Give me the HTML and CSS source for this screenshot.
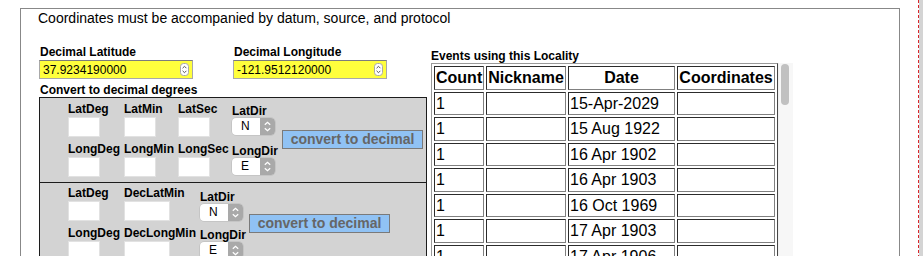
FILE: index.html
```html
<!DOCTYPE HTML>
<html>
  <head>
    <meta charset="utf-8">
    <title>Locality Coordinates</title>
    <link rel="stylesheet" href="styles.css">
  </head>
  <body>
    <div class="page">
      <div class="locbox">
        <p class="note">Coordinates must be accompanied by datum, source, and protocol</p>
        <div class="cols">
          <div class="coords">
            <div class="decrow">
              <div class="field">
                <div class="lbl">Decimal Latitude</div>
                <div class="numbox">
                  <span>37.9234190000</span>
                  <svg class="spin" width="9" height="13" viewBox="0 0 9 13"><rect x="0.5" y="0.5" width="8" height="12" rx="3" fill="#fff" stroke="#a8a8a8"/><path d="M2.6 5.2 L4.5 3.3 L6.4 5.2 M2.6 7.8 L4.5 9.7 L6.4 7.8" fill="none" stroke="#555"/></svg>
                </div>
              </div>
              <div class="field">
                <div class="lbl">Decimal Longitude</div>
                <div class="numbox">
                  <span>-121.9512120000</span>
                  <svg class="spin" width="9" height="13" viewBox="0 0 9 13"><rect x="0.5" y="0.5" width="8" height="12" rx="3" fill="#fff" stroke="#a8a8a8"/><path d="M2.6 5.2 L4.5 3.3 L6.4 5.2 M2.6 7.8 L4.5 9.7 L6.4 7.8" fill="none" stroke="#555"/></svg>
                </div>
              </div>
            </div>
            <div class="lbl subhead">Convert to decimal degrees</div>

            <!-- degrees / minutes / seconds -->
            <div class="convbox dms">
              <div class="cell"><div class="lbl">LatDeg</div><span class="txt"></span></div>
              <div class="cell"><div class="lbl">LatMin</div><span class="txt"></span></div>
              <div class="cell"><div class="lbl">LatSec</div><span class="txt"></span></div>
              <div class="cell dir top">
                <div class="lbl">LatDir</div>
                <div class="popup"><span class="val">N</span><span class="arrows"><svg width="15" height="17" viewBox="0 0 15 17"><path d="M4.8 6.8 L7.5 4.3 L10.2 6.8 M4.8 10.2 L7.5 12.7 L10.2 10.2" fill="none" stroke="#fff" stroke-width="1.3"/></svg></span></div>
              </div>
              <button class="convert">convert to decimal</button>
              <div class="cell"><div class="lbl">LongDeg</div><span class="txt"></span></div>
              <div class="cell"><div class="lbl">LongMin</div><span class="txt"></span></div>
              <div class="cell"><div class="lbl">LongSec</div><span class="txt"></span></div>
              <div class="cell dir">
                <div class="lbl">LongDir</div>
                <div class="popup"><span class="val">E</span><span class="arrows"><svg width="15" height="17" viewBox="0 0 15 17"><path d="M4.8 6.8 L7.5 4.3 L10.2 6.8 M4.8 10.2 L7.5 12.7 L10.2 10.2" fill="none" stroke="#fff" stroke-width="1.3"/></svg></span></div>
              </div>
            </div>

            <!-- degrees / decimal minutes -->
            <div class="convbox ddm">
              <div class="cell"><div class="lbl">LatDeg</div><span class="txt"></span></div>
              <div class="cell"><div class="lbl">DecLatMin</div><span class="txt wide"></span></div>
              <div class="cell dir top">
                <div class="lbl">LatDir</div>
                <div class="popup"><span class="val">N</span><span class="arrows"><svg width="15" height="17" viewBox="0 0 15 17"><path d="M4.8 6.8 L7.5 4.3 L10.2 6.8 M4.8 10.2 L7.5 12.7 L10.2 10.2" fill="none" stroke="#fff" stroke-width="1.3"/></svg></span></div>
              </div>
              <button class="convert">convert to decimal</button>
              <div class="cell"><div class="lbl">LongDeg</div><span class="txt"></span></div>
              <div class="cell"><div class="lbl">DecLongMin</div><span class="txt wide"></span></div>
              <div class="cell dir">
                <div class="lbl">LongDir</div>
                <div class="popup"><span class="val">E</span><span class="arrows"><svg width="15" height="17" viewBox="0 0 15 17"><path d="M4.8 6.8 L7.5 4.3 L10.2 6.8 M4.8 10.2 L7.5 12.7 L10.2 10.2" fill="none" stroke="#fff" stroke-width="1.3"/></svg></span></div>
              </div>
            </div>
          </div>

          <div class="events">
            <div class="lbl">Events using this Locality</div>
            <div class="scroller">
              <table class="evtable">
                <thead>
                  <tr>
                    <th class="c-count">Count</th>
                    <th class="c-nick">Nickname</th>
                    <th class="c-date">Date</th>
                    <th class="c-coord">Coordinates</th>
                  </tr>
                </thead>
                <tbody>
                  <tr><td>1</td><td></td><td>15-Apr-2029</td><td></td></tr>
                  <tr><td>1</td><td></td><td>15 Aug 1922</td><td></td></tr>
                  <tr><td>1</td><td></td><td>16 Apr 1902</td><td></td></tr>
                  <tr><td>1</td><td></td><td>16 Apr 1903</td><td></td></tr>
                  <tr><td>1</td><td></td><td>16 Oct 1969</td><td></td></tr>
                  <tr><td>1</td><td></td><td>17 Apr 1903</td><td></td></tr>
                  <tr><td>1</td><td></td><td>17 Apr 1906</td><td></td></tr>
                  <tr><td>1</td><td></td><td>18 Apr 1906</td><td></td></tr>
                  <tr><td>1</td><td></td><td>19 May 1935</td><td></td></tr>
                </tbody>
              </table>
              <div class="scrollbar"><div class="thumb"></div></div>
            </div>
          </div>
        </div>
      </div>
    </div>
  </body>
</html>
```

FILE: styles.css
```css
body
{
    margin: 0;
    background-color: #d4d4d4;
    font-family: "Liberation Sans", Arial, sans-serif;
    color: #000;
}
.page
{
    width: 919px;
    min-height: 300px;
    background-color: white;
    border-right: 1px dashed #d9262b;
    padding: 8px 0 0 20px;
    box-sizing: border-box;
}
.locbox
{
    width: 880px;
    height: 320px;
    border: 1px solid #888;
    box-sizing: border-box;
}
.note
{
    margin: 1px 0 0 17px;
    font-size: 14px;
    line-height: 16px;
}
.lbl
{
    font-size: 12px;
    line-height: 14px;
    font-weight: bold;
    white-space: nowrap;
}

/* two columns: coordinate entry and events table */
.cols
{
    display: flex;
    gap: 4px;
    margin: 19px 0 0 18px;
}
.coords { width: 388px; }
.decrow { display: flex; }
.field { width: 196px; }
.field .lbl { padding-left: 1px; }
.numbox
{
    display: flex;
    align-items: center;
    justify-content: space-between;
    width: 154px;
    height: 19px;
    margin-top: 1px;
    padding: 0 3px 0 3px;
    box-sizing: border-box;
    background-color: #ffff3c;
    border: 1px solid #a9a9a9;
    border-top-color: #7d7d7d;
    font-size: 12px;
}
.spin { display: block; }
.subhead { margin-top: 4px; padding-left: 1px; }

.convbox
{
    display: grid;
    grid-template-rows: 35px 35px;
    row-gap: 5px;
    padding: 4px 3px 5px 28px;
    background-color: #d3d3d3;
    border: 1px solid #1c1c1c;
}
.convbox.dms { grid-template-columns: 56px 54px 54px 50px auto; }
.convbox.ddm
{
    grid-template-columns: 56px 76px 49px auto;
    border-top: none;
    padding-top: 3px;
}
.cell .txt
{
    display: block;
    width: 32px;
    height: 20px;
    margin-top: 1px;
    box-sizing: border-box;
    background-color: white;
    border: 1px solid #e2e2e2;
}
.cell .txt.wide { width: 46px; }
.cell.dir { padding-top: 2px; }
.ddm .cell.dir.top { padding-top: 4px; }
.popup
{
    display: flex;
    width: 43px;
    height: 17px;
    border-radius: 4px;
    overflow: hidden;
    background-color: white;
    box-shadow: 0 0 0 0.5px #b8b8b8;
    font-size: 12px;
    line-height: 17px;
}
.popup .val { flex: 1; padding-left: 9px; }
.popup .arrows
{
    width: 15px;
    background-color: #a9a9a9;
}
.popup svg { display: block; }
.convert
{
    grid-row: 1 / 3;
    align-self: center;
    width: 141px;
    height: 19px;
    padding: 0;
    margin: 0;
    background-color: #90c2f4;
    border: 1px solid #7a7a7a;
    color: #666;
    font-family: "Liberation Sans", Arial, sans-serif;
    font-size: 14px;
    font-weight: bold;
    line-height: 17px;
}
.dms .convert { grid-column: 5; }
.ddm .convert { grid-column: 4; }

/* events */
.events { padding-top: 4px; }
.scroller
{
    display: flex;
    height: 260px;
    overflow: hidden;
}
table.evtable
{
    width: 347px;
    table-layout: fixed;
    border-spacing: 2px;
    border-width: 1px;
    border-style: outset;
    border-color: #9a9a9a;
    align-self: flex-start;
    font-size: 16px;
}
table.evtable th,
table.evtable td
{
    box-sizing: border-box;
    border-width: 1px;
    border-style: inset;
    border-color: #808080;
    padding: 1px;
    line-height: 19.5px;
    white-space: nowrap;
    overflow: hidden;
}
table.evtable td { text-align: left; }
.c-count { width: 50px; }
.c-nick { width: 80px; }
.c-date { width: 107px; }
.c-coord { width: 98px; }
.scrollbar
{
    width: 14px;
    background-color: #f7f7f7;
    border-left: 1px solid #f0f0f0;
}
.thumb
{
    width: 8px;
    height: 41px;
    margin: 1px 0 0 2px;
    border-radius: 4px;
    background-color: #c1c1c1;
}
```
